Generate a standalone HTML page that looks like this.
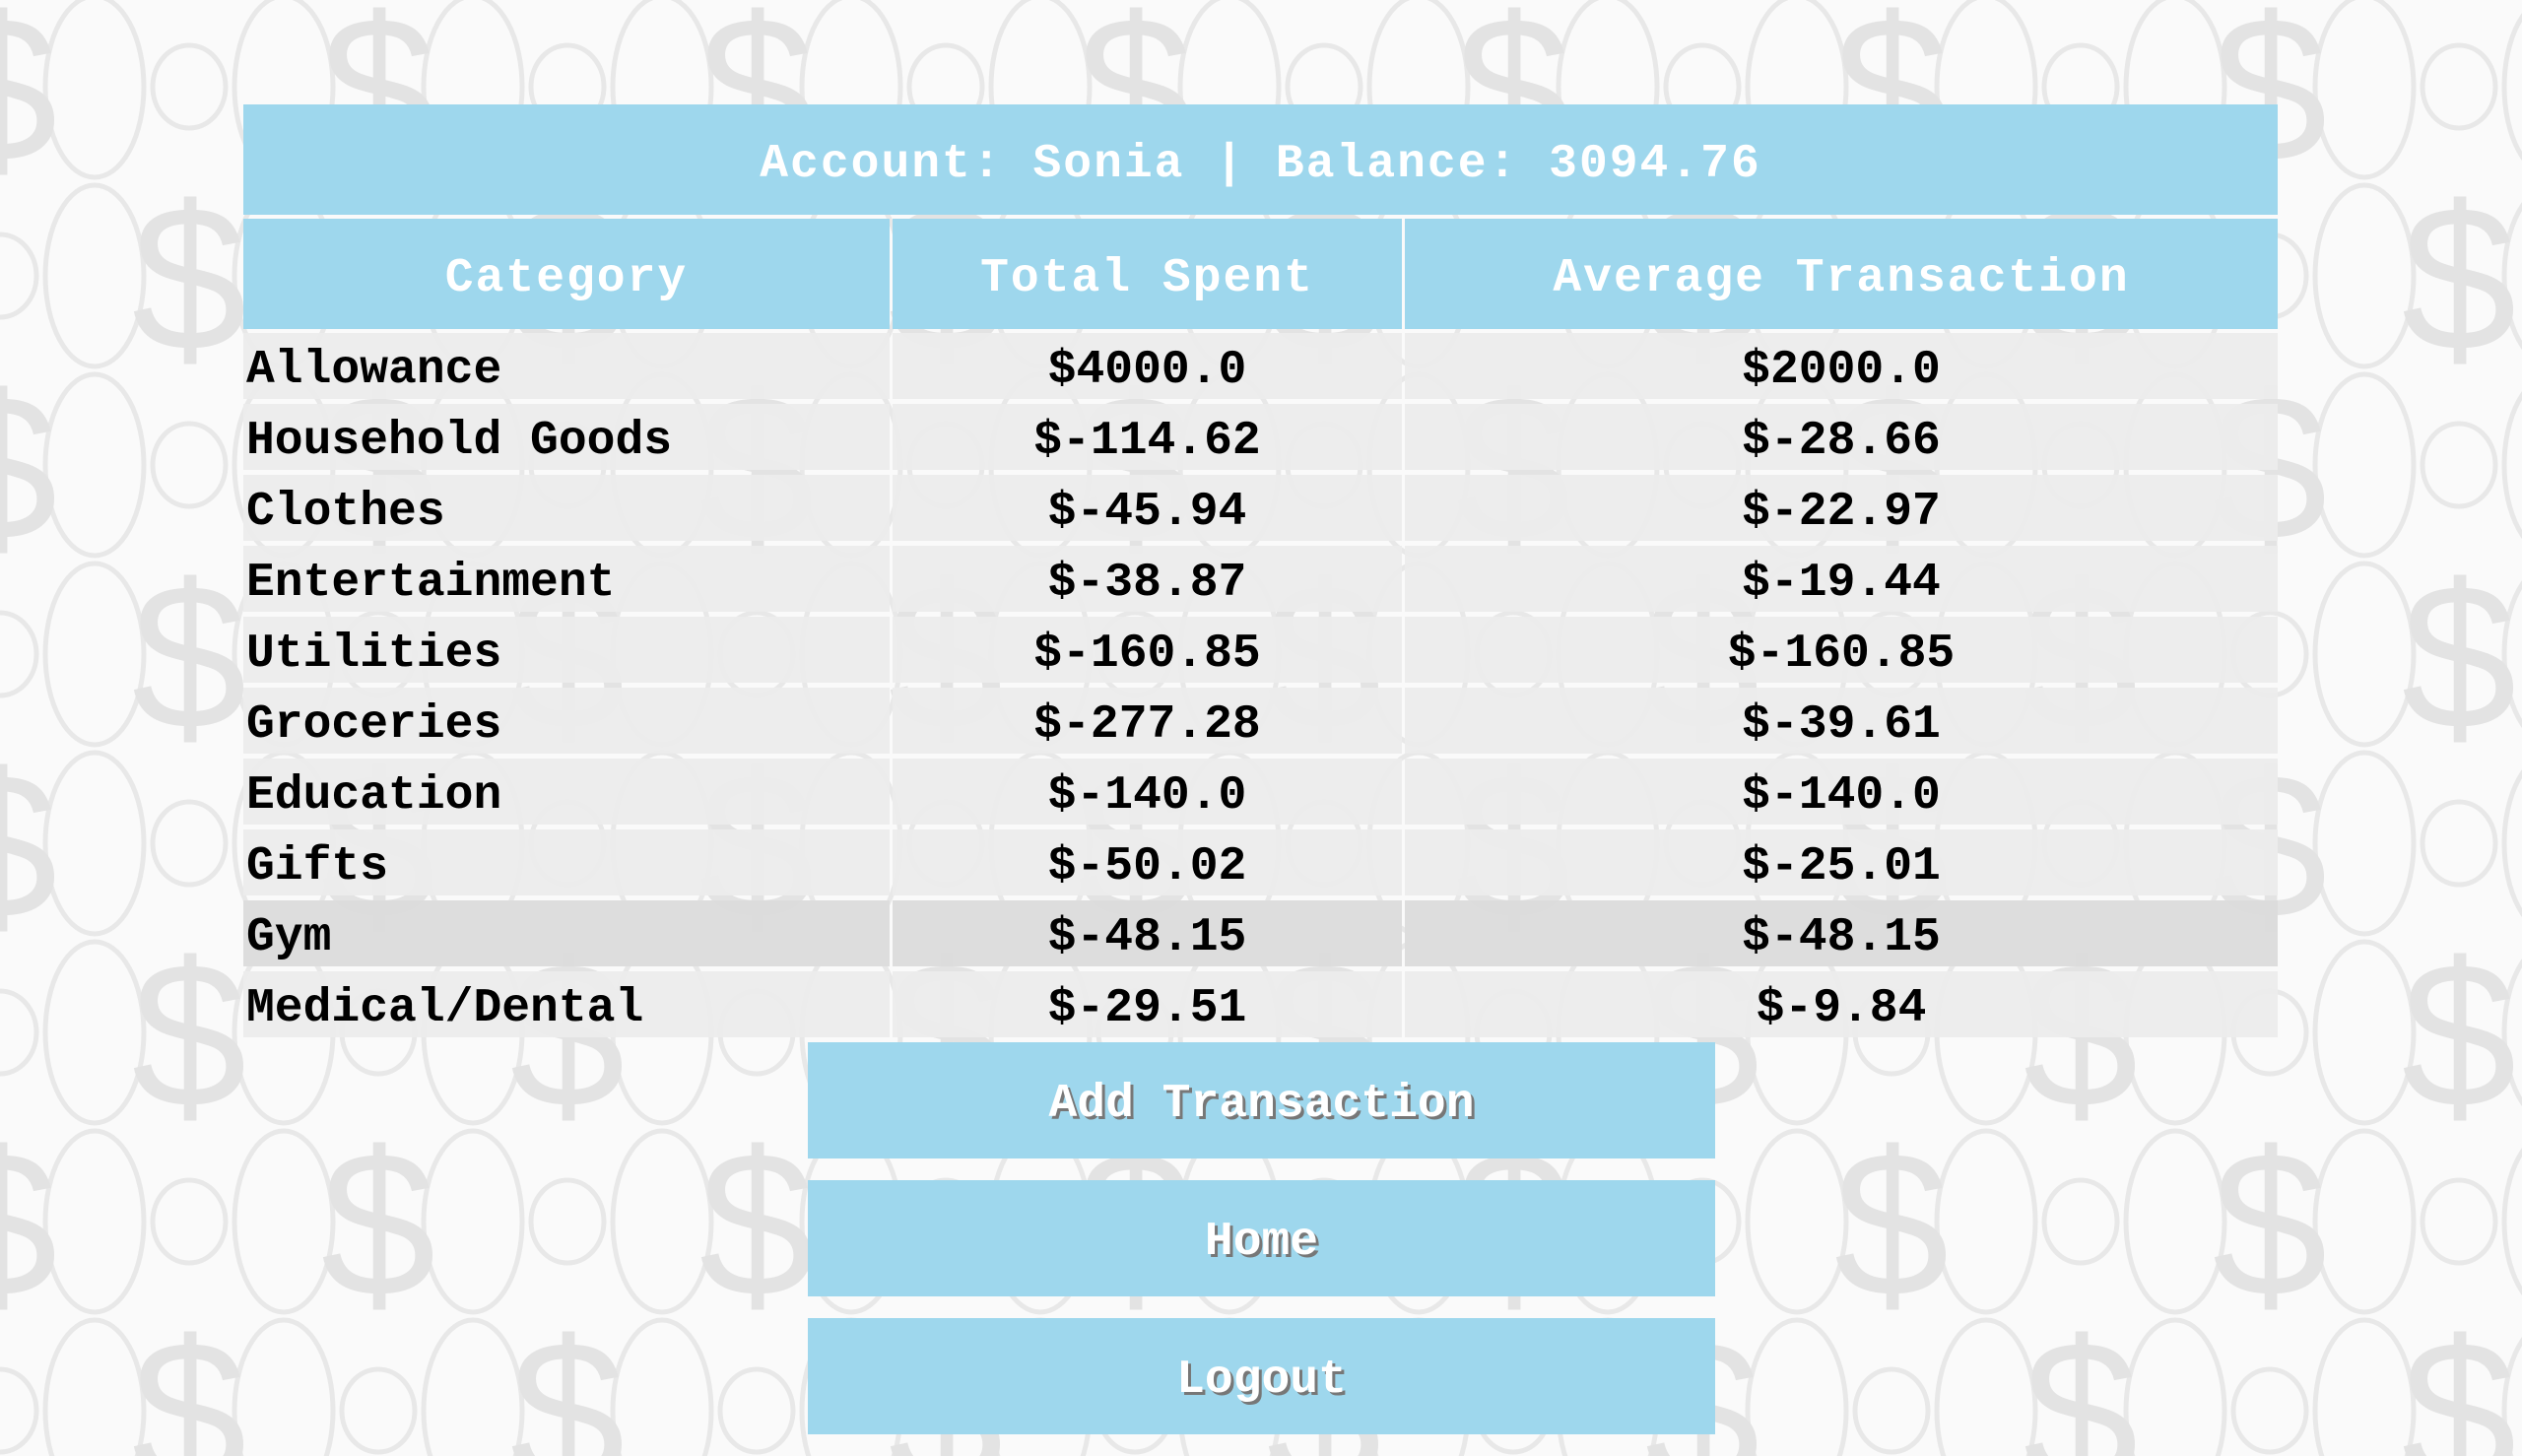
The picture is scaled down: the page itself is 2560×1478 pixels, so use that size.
<!DOCTYPE html>
<html><head><meta charset="utf-8"><style>
html,body{margin:0;padding:0;width:2560px;height:1478px;overflow:hidden;background:#fafafa;}
.bg{position:absolute;left:0;top:0;}
.c{position:absolute;font-family:"Liberation Mono",monospace;font-weight:bold;font-size:48px;line-height:1;display:flex;align-items:center;box-sizing:border-box;padding-top:9px;}
.h{background:#9ed7ed;color:#fff;justify-content:center;letter-spacing:2px;}
.d{background:rgba(236,236,236,0.95);color:#000;}
.l{padding-left:3px;}
.m{justify-content:center;}
.g{background:rgba(220,220,220,0.97);}
.b{position:absolute;left:820px;width:921px;height:118px;background:#9ed7ed;color:#fff;font-family:"Liberation Mono",monospace;font-weight:bold;font-size:48px;display:flex;align-items:center;justify-content:center;text-shadow:3px 3px 0 #777;box-sizing:border-box;padding-top:8px;}
</style></head><body>
<svg class="bg" width="2560" height="1478" xmlns="http://www.w3.org/2000/svg">
<defs>
<pattern id="p" width="384" height="384" patternUnits="userSpaceOnUse">
<g fill="none" stroke="#e8e8e8" stroke-width="5">
<ellipse cx="192" cy="88" rx="37" ry="42"/>
<ellipse cx="0" cy="280" rx="37" ry="42"/><ellipse cx="384" cy="280" rx="37" ry="42"/>
<ellipse cx="96" cy="88" rx="50" ry="92"/><ellipse cx="288" cy="88" rx="50" ry="92"/>
<ellipse cx="96" cy="280" rx="50" ry="92"/><ellipse cx="288" cy="280" rx="50" ry="92"/>
<ellipse cx="96" cy="472" rx="50" ry="92"/><ellipse cx="288" cy="472" rx="50" ry="92"/>
<ellipse cx="96" cy="-104" rx="50" ry="92"/><ellipse cx="288" cy="-104" rx="50" ry="92"/>
</g>
<g fill="#e3e3e3" font-family="Liberation Sans Narrow,Liberation Sans,sans-serif" font-size="210" text-anchor="middle">
<text x="0" y="163">$</text><text x="384" y="163">$</text>
<text x="192" y="355">$</text><text x="192" y="-29">$</text>
<text x="0" y="547">$</text><text x="384" y="547">$</text>
</g>
</pattern>
</defs>
<rect width="2560" height="1478" fill="url(#p)"/>
</svg>

<div class="c h" style="left:247px;top:106px;width:2065px;height:112px;">Account: Sonia | Balance: 3094.76</div>
<div class="c h" style="left:247px;top:222px;width:656px;height:112px;">Category</div>
<div class="c h" style="left:906px;top:222px;width:517px;height:112px;">Total Spent</div>
<div class="c h" style="left:1426px;top:222px;width:886px;height:112px;">Average Transaction</div>

<div class="c d l" style="left:247px;top:338px;width:656px;height:67px;">Allowance</div>
<div class="c d m" style="left:906px;top:338px;width:517px;height:67px;">$4000.0</div>
<div class="c d m" style="left:1426px;top:338px;width:886px;height:67px;">$2000.0</div>

<div class="c d l" style="left:247px;top:410px;width:656px;height:67px;">Household Goods</div>
<div class="c d m" style="left:906px;top:410px;width:517px;height:67px;">$-114.62</div>
<div class="c d m" style="left:1426px;top:410px;width:886px;height:67px;">$-28.66</div>

<div class="c d l" style="left:247px;top:482px;width:656px;height:67px;">Clothes</div>
<div class="c d m" style="left:906px;top:482px;width:517px;height:67px;">$-45.94</div>
<div class="c d m" style="left:1426px;top:482px;width:886px;height:67px;">$-22.97</div>

<div class="c d l" style="left:247px;top:554px;width:656px;height:67px;">Entertainment</div>
<div class="c d m" style="left:906px;top:554px;width:517px;height:67px;">$-38.87</div>
<div class="c d m" style="left:1426px;top:554px;width:886px;height:67px;">$-19.44</div>

<div class="c d l" style="left:247px;top:626px;width:656px;height:67px;">Utilities</div>
<div class="c d m" style="left:906px;top:626px;width:517px;height:67px;">$-160.85</div>
<div class="c d m" style="left:1426px;top:626px;width:886px;height:67px;">$-160.85</div>

<div class="c d l" style="left:247px;top:698px;width:656px;height:67px;">Groceries</div>
<div class="c d m" style="left:906px;top:698px;width:517px;height:67px;">$-277.28</div>
<div class="c d m" style="left:1426px;top:698px;width:886px;height:67px;">$-39.61</div>

<div class="c d l" style="left:247px;top:770px;width:656px;height:67px;">Education</div>
<div class="c d m" style="left:906px;top:770px;width:517px;height:67px;">$-140.0</div>
<div class="c d m" style="left:1426px;top:770px;width:886px;height:67px;">$-140.0</div>

<div class="c d l" style="left:247px;top:842px;width:656px;height:67px;">Gifts</div>
<div class="c d m" style="left:906px;top:842px;width:517px;height:67px;">$-50.02</div>
<div class="c d m" style="left:1426px;top:842px;width:886px;height:67px;">$-25.01</div>

<div class="c d g l" style="left:247px;top:914px;width:656px;height:67px;">Gym</div>
<div class="c d g m" style="left:906px;top:914px;width:517px;height:67px;">$-48.15</div>
<div class="c d g m" style="left:1426px;top:914px;width:886px;height:67px;">$-48.15</div>

<div class="c d l" style="left:247px;top:986px;width:656px;height:67px;">Medical/Dental</div>
<div class="c d m" style="left:906px;top:986px;width:517px;height:67px;">$-29.51</div>
<div class="c d m" style="left:1426px;top:986px;width:886px;height:67px;">$-9.84</div>

<div class="b" style="top:1058px;">Add Transaction</div>
<div class="b" style="top:1198px;">Home</div>
<div class="b" style="top:1338px;">Logout</div>
</body></html>
